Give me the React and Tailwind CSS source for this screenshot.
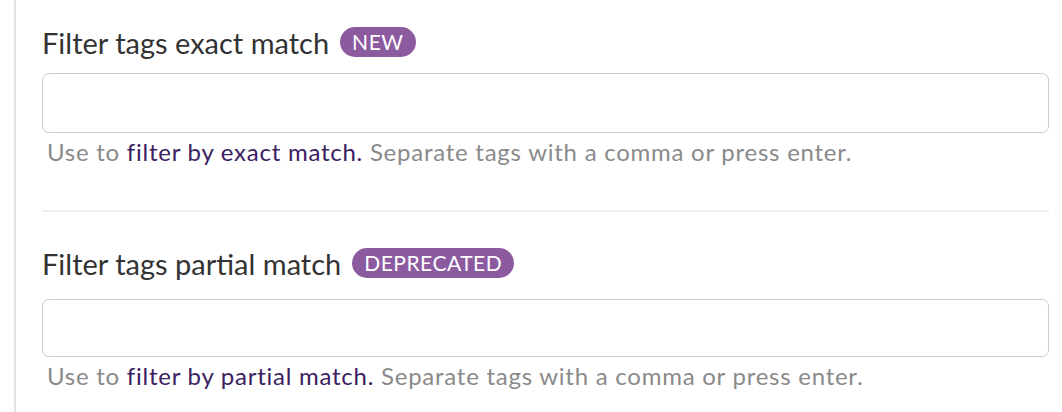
import React from 'react';

const Field = ({ label, badge, linkText, gap }) => (
  <div>
    <div className="flex items-center gap-[11px] h-[30px]">
      <span className="text-[29px] text-[#333333] leading-none">{label}</span>
      <span className="h-[30px] px-[12px] rounded-full bg-[#8b5a9f] text-white text-[21px] tracking-[0.5px] leading-[30px]">{badge}</span>
    </div>
    <input
      type="text"
      className={`${gap} block w-full rounded-[7px] border-[1.5px] border-[#cccccc] bg-white outline-none`}
    />
    <p className="mt-[4px] text-[24px] leading-[30px] tracking-[0.75px] text-[#8a8a8a] pl-[5px]">
      Use to <a className="text-[#3b2062]">{linkText}</a> Separate tags with a comma or press enter.
    </p>
  </div>
);

export default function App() {
  return (
    <div className="w-[1062px] h-[412px] bg-white overflow-hidden pl-[14px] font-['Lato','Open_Sans',sans-serif]">
      <div className="h-full border-l-2 border-[#e3e3e3] pl-[26px] pr-[13px] pt-[27px]">
        <Field label="Filter tags exact match" badge="NEW" linkText="filter by exact match." gap="mt-[16px] h-[60px]" />
        <div className="mt-[43px] border-t-2 border-[#eeeeee]" />
        <div className="mt-[36px]">
          <Field label="Filter tags partial match" badge="DEPRECATED" linkText="filter by partial match." gap="mt-[21px] h-[58px]" />
        </div>
      </div>
    </div>
  );
}
